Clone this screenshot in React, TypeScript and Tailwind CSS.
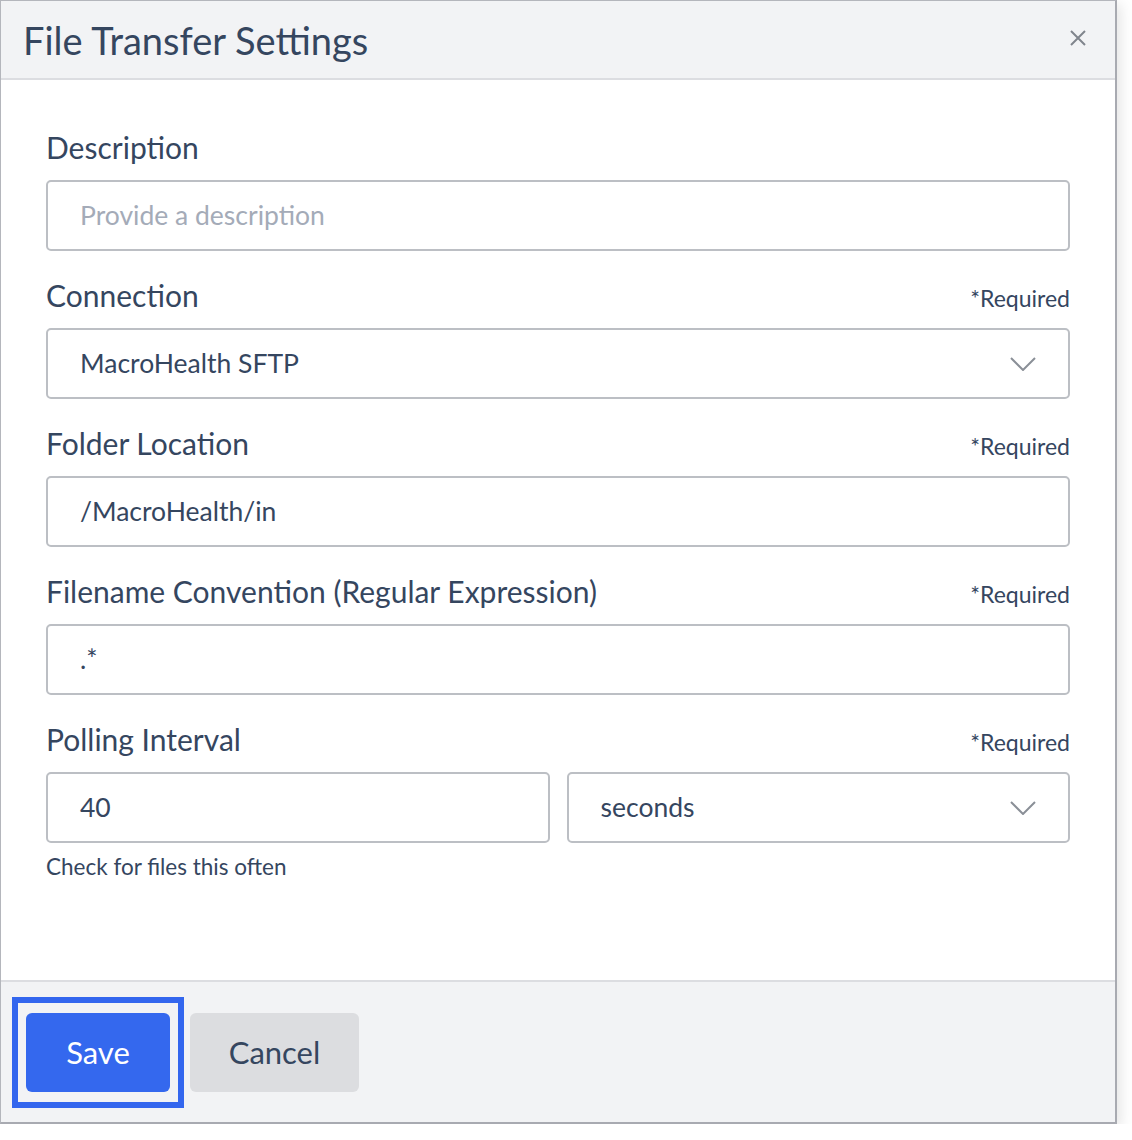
const font = { fontFamily: "Lato, 'Noto Sans', sans-serif" };

const Chevron = () => (
  <svg width="26" height="14" viewBox="0 0 26 14" fill="none" className="shrink-0">
    <polyline points="1,1 13,13 25,1" stroke="#8a8f97" strokeWidth="2" />
  </svg>
);

const FieldRow = ({ label, required }: { label: string; required?: boolean }) => (
  <div className="flex h-[48px] items-baseline justify-between">
    <span className="text-[30px] leading-[30px] text-[#35465f]">{label}</span>
    {required && <span className="text-[23px] leading-[30px] text-[#35465f]">*Required</span>}
  </div>
);

const Box = ({ children, placeholder }: { children?: React.ReactNode; placeholder?: boolean }) => (
  <div
    className={
      "flex h-[71px] items-center justify-between rounded-[5px] border-2 border-[#bcbfc4] bg-white pl-[32px] pr-[32px] text-[26.5px] " +
      (placeholder ? "text-[#a4abb8]" : "text-[#35465f]")
    }
  >
    {children}
  </div>
);

export default function App() {
  return (
    <div className="bg-white p-0" style={font}>
      <div className="flex h-[1124px] w-[1117px] flex-col border-l border-t border-r-2 border-b-2 border-l-[#b4b6bc] border-t-[#b4b6bc] border-r-[#a8aab1] border-b-[#a8aab1] shadow-[4px_4px_12px_rgba(0,0,0,0.10)]">
        <header className="flex h-[79px] shrink-0 items-center justify-between border-b-2 border-[#dcdde1] bg-[#f2f3f5] pl-[22px] pr-[29px]">
          <h1 className="text-[38px] leading-none text-[#35465f]">File Transfer Settings</h1>
          <svg width="16" height="16" viewBox="0 0 16 16" fill="none" className="mb-[3px]">
            <path d="M1 1 L15 15 M15 1 L1 15" stroke="#80858d" strokeWidth="2" />
          </svg>
        </header>

        <main className="flex flex-1 flex-col gap-[29px] bg-white px-[45px] pt-[52px]">
          <div>
            <FieldRow label="Description" />
            <Box placeholder>Provide a description</Box>
          </div>
          <div>
            <FieldRow label="Connection" required />
            <Box>
              <span>MacroHealth SFTP</span>
              <Chevron />
            </Box>
          </div>
          <div>
            <FieldRow label="Folder Location" required />
            <Box>/MacroHealth/in</Box>
          </div>
          <div>
            <FieldRow label="Filename Convention (Regular Expression)" required />
            <Box>.*</Box>
          </div>
          <div>
            <FieldRow label="Polling Interval" required />
            <div className="grid grid-cols-2 gap-[17px]">
              <Box>40</Box>
              <Box>
                <span>seconds</span>
                <Chevron />
              </Box>
            </div>
            <p className="mt-[12px] text-[22.5px] leading-[24px] text-[#35465f]">Check for files this often</p>
          </div>
        </main>

        <footer className="flex h-[142px] shrink-0 items-center gap-[6px] border-t-2 border-[#dcdde1] bg-[#f2f3f5] pl-[11px]">
          <div className="border-[6px] border-[#3366ee] px-[8px] py-[10px]">
            <button className="h-[79px] w-[144px] rounded-[6px] bg-[#3468ee] text-[31px] text-white">Save</button>
          </div>
          <button className="h-[79px] w-[169px] rounded-[6px] bg-[#dcdde0] text-[31px] text-[#35465f]">Cancel</button>
        </footer>
      </div>
    </div>
  );
}
